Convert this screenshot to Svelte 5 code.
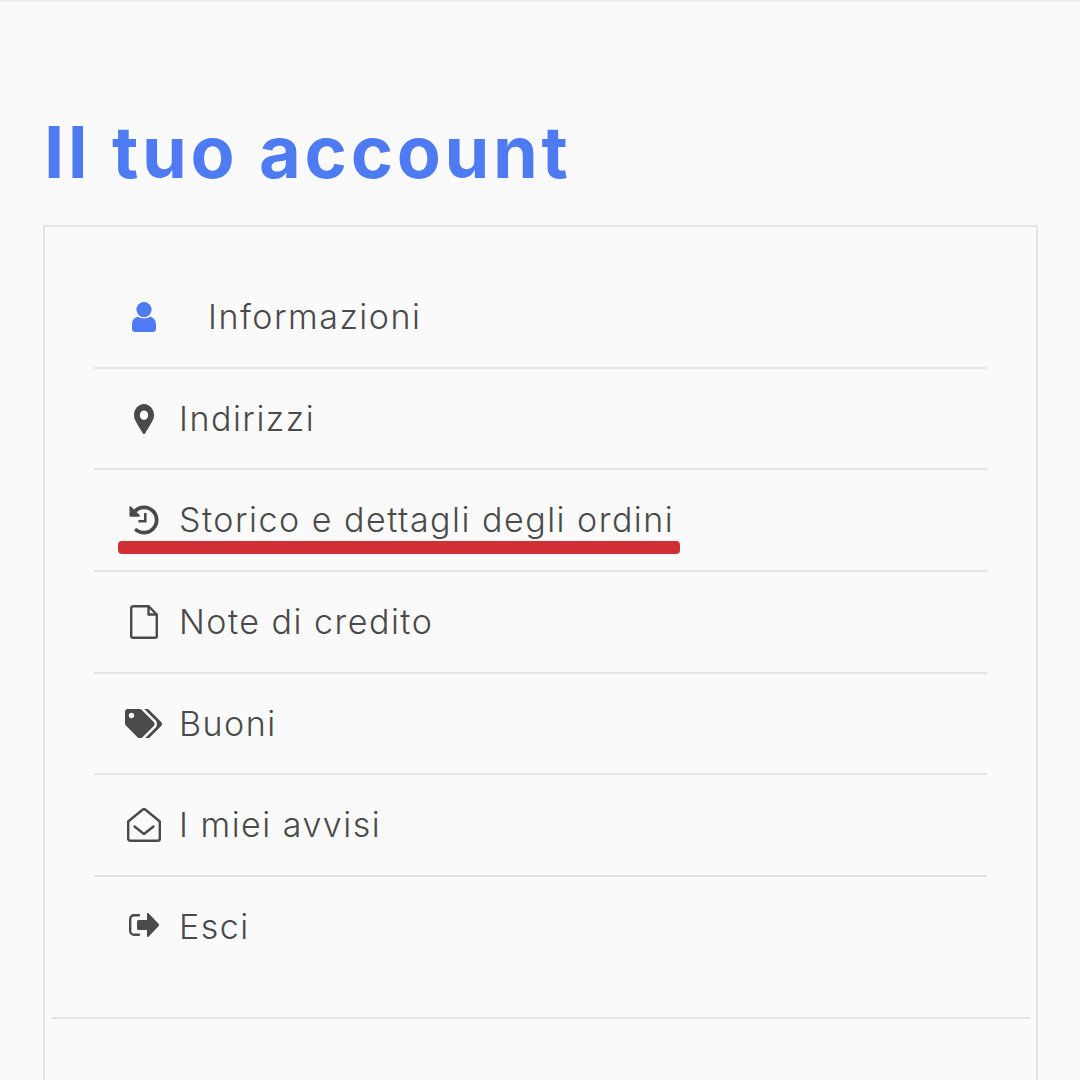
<script>
  const items = [
    { label: 'Informazioni', icon: 'user', active: true },
    { label: 'Indirizzi', icon: 'pin' },
    { label: 'Storico e dettagli degli ordini', icon: 'history', marked: true },
    { label: 'Note di credito', icon: 'file' },
    { label: 'Buoni', icon: 'tags' },
    { label: 'I miei avvisi', icon: 'mail' },
    { label: 'Esci', icon: 'logout' }
  ];
</script>

<div class="page">
  <h1>Il tuo account</h1>
  <section class="card">
    <ul>
      {#each items as item}
        <li class:active={item.active} class:marked={item.marked}>
          <span class="icon">
            {#if item.icon === 'user'}
              <svg width="24" height="30" viewBox="0 0 24 30" fill="currentColor">
                <circle cx="12" cy="7.600" r="7.600" />
                <path d="M6 14.800c3.500 2.200 8.500 2.200 12 0 3.800.6 6 3.700 6 7.700v4.500c0 1.700-1.300 3-3 3H3c-1.700 0-3-1.300-3-3v-4.500c0-4 2.200-7.100 6-7.700z" />
              </svg>
            {:else if item.icon === 'pin'}
              <svg width="20" height="30" viewBox="0 0 384 512" preserveAspectRatio="none" fill="currentColor">
                <path d="M172.268 501.67C26.97 291.031 0 256.1 0 192 0 85.961 85.961 0 192 0s192 85.961 192 192c0 64.1-26.97 99.031-172.268 309.67-9.535 13.774-29.93 13.773-39.464 0zM192 272c44.183 0 80-35.817 80-80s-35.817-80-80-80-80 35.817-80 80 35.817 80 80 80z" />
              </svg>
            {:else if item.icon === 'history'}
              <svg width="30" height="30" viewBox="0 0 512 512" fill="currentColor">
                <path d="M504 255.531c.253 136.64-111.18 248.372-247.82 248.468-59.015.042-113.223-20.53-155.822-54.911-11.077-8.94-11.905-25.541-1.839-35.607l11.267-11.267c8.609-8.609 22.353-9.551 31.891-1.984C173.062 425.135 212.781 440 256 440c101.705 0 184-82.311 184-184 0-101.705-82.311-184-184-184-48.814 0-93.149 18.969-126.068 49.932l50.754 50.754c10.08 10.08 2.941 27.314-11.313 27.314H24c-8.837 0-16-7.163-16-16V38.627c0-14.254 17.234-21.393 27.314-11.314l49.372 49.372C129.209 34.136 189.552 8 256 8c136.81 0 247.747 110.78 248 247.531z" />
                <path d="M256 136h44v164H160v-44h96z" />
              </svg>
            {:else if item.icon === 'file'}
              <svg width="28" height="34" viewBox="0 0 28 34" fill="none" stroke="currentColor" stroke-width="2.400" stroke-linejoin="round">
                <path d="M3.500 1.200h15l8.300 8.300v21.800a1.500 1.500 0 0 1-1.500 1.500H3.500A2.300 1.500 0 0 1 1.200 31.300V3.500a2.300 2.300 0 0 1 2.300-2.300z" />
                <path d="M18.500 1.200v8.300h8.300" />
              </svg>
            {:else if item.icon === 'tags'}
              <svg width="37" height="29.600" viewBox="0 0 640 512" fill="currentColor">
                <path d="M497.941 225.941L286.059 14.059A48 48 0 0 0 252.118 0H48C21.49 0 0 21.49 0 48v204.118a48 48 0 0 0 14.059 33.941l211.882 211.882c18.744 18.745 49.136 18.746 67.882 0l204.118-204.118c18.745-18.745 18.745-49.137 0-67.882zM112 160c-26.51 0-48-21.49-48-48s21.490-48 48-48 48 21.490 48 48-21.490 48-48 48zm513.941 133.823L421.823 497.941c-18.745 18.745-49.137 18.745-67.882 0l-.36-.36L527.640 323.522c16.999-16.999 26.360-39.600 26.360-63.640s-9.362-46.641-26.360-63.640L331.397 0h48.721a48 48 0 0 1 33.941 14.059l211.882 211.882c18.745 18.745 18.745 49.137 0 67.882z" />
              </svg>
            {:else if item.icon === 'mail'}
              <svg width="34" height="34" viewBox="0 0 34 34" fill="none" stroke="currentColor" stroke-width="2.400" stroke-linejoin="round" stroke-linecap="round">
                <path d="M1.200 13.500 15.500 1.800a2.400 2.400 0 0 1 3 0l14.300 11.700v17.300a2 2 0 0 1-2 2H3.200a2 2 0 0 1-2-2z" />
                <path d="M7.500 18.500 17 26l9.500-7.500" />
              </svg>
            {:else}
              <svg class="logout" width="30" height="24" viewBox="0 0 30 24" fill="currentColor">
                <path d="M10 2.200H5A3.800 3.800 0 0 0 1.200 6v12A3.800 3.800 0 0 0 5 21.800h5" fill="none" stroke="currentColor" stroke-width="2.400" stroke-linecap="round" />
                <path d="M18 .8c0-.8.900-1.100 1.500-.6l10 10.500c.7.700.7 1.900 0 2.600l-10 10.500c-.6.500-1.500.2-1.500-.6V17H9.500A1.500 1.500 0 0 1 8 15.500v-7A1.500 1.500 0 0 1 9.500 7H18z" />
              </svg>
            {/if}
          </span>
          <span class="label">{item.label}</span>
        </li>
      {/each}
    </ul>
    <hr />
  </section>
</div>

<style>
  :global(body) {
    margin: 0;
    background: #fafafa;
  }

  .page {
    height: 1080px;
    box-sizing: border-box;
    border-top: 2px solid #eeeeee;
    overflow: hidden;
    font-family: Inter, "Noto Sans", sans-serif;
    color: #4a4a4a;
  }

  h1 {
    margin: 0;
    padding: 105px 0 29px 44px;
    height: 89px;
    font-size: 72px;
    line-height: 89px;
    font-weight: 700;
    letter-spacing: 3.700px;
    color: #4f7bf2;
    box-sizing: content-box;
  }

  .card {
    margin: 0 42px 0 43px;
    padding: 40px 6px 0;
    border: 2px solid #e4e4e4;
    height: 900px;
  }

  ul {
    list-style: none;
    margin: 0 43px;
    padding: 0;
  }

  li {
    position: relative;
    height: 99.700px;
    display: flex;
    align-items: center;
    padding-left: 24px;
    border-bottom: 2px solid #e4e4e4;
    font-size: 34px;
    font-weight: 300;
    letter-spacing: 1.500px;
  }

  li:last-child {
    border-bottom: 0;
  }

  .icon {
    width: 51px;
    margin-right: 10px;
    display: flex;
    justify-content: center;
  }

  .logout {
    margin-top: -3px;
  }

  .label {
    margin-top: -1px;
  }

  .active .icon {
    color: #4f7bf2;
  }

  .active .label {
    margin-left: 29px;
  }

  .marked::after {
    content: "";
    position: absolute;
    left: 24px;
    top: 70.600px;
    width: 562px;
    height: 13px;
    border-radius: 4px;
    background: #cf3035;
  }

  hr {
    margin: 40px 0 0;
    border: 0;
    border-top: 2px solid #e4e4e4;
  }
</style>
